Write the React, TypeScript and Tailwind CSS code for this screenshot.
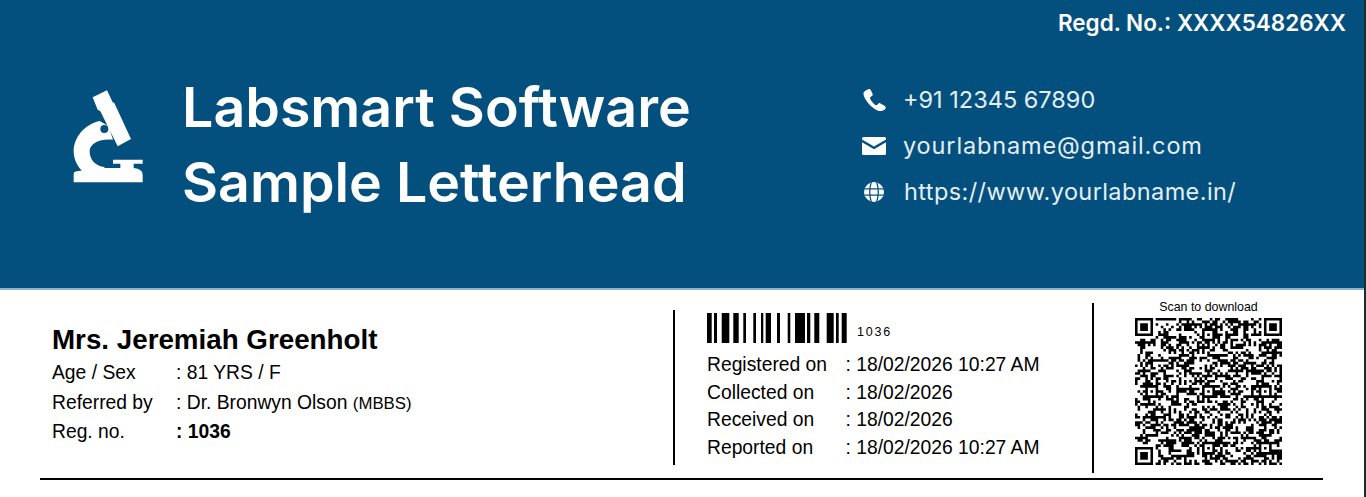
import React from 'react';

const SANS = "font-['Liberation_Sans',Arial,sans-serif]";

// barcode bars as [x, width], measured off the reference
const BARS: [number, number][] = [
  [0, 4.7], [7, 3], [14.7, 7.6], [26.3, 5.4], [36.3, 2.7], [46.3, 2.7], [54, 2.3], [58.7, 5.3],
  [70, 3], [80.7, 2.6], [88, 10], [100, 3.3], [107.3, 5], [119.7, 7], [129, 2.7], [134.7, 5],
];

const QR_SIZE = 57;

function buildQr() {
  const grid: boolean[][] = [];
  let seed = 1036;
  for (let y = 0; y < QR_SIZE; y++) {
    const row: boolean[] = [];
    for (let x = 0; x < QR_SIZE; x++) {
      seed = (seed * 1103515245 + 12345) & 0x7fffffff;
      row.push(((seed >> 16) & 7) > 3);
    }
    grid.push(row);
  }
  const finder = (ox: number, oy: number) => {
    for (let y = -1; y < 8; y++) {
      for (let x = -1; x < 8; x++) {
        const gx = ox + x;
        const gy = oy + y;
        if (gx < 0 || gy < 0 || gx >= QR_SIZE || gy >= QR_SIZE) continue;
        const ring = x >= 0 && x <= 6 && y >= 0 && y <= 6 && (x === 0 || x === 6 || y === 0 || y === 6);
        const core = x >= 2 && x <= 4 && y >= 2 && y <= 4;
        grid[gy][gx] = ring || core;
      }
    }
  };
  finder(0, 0);
  finder(QR_SIZE - 7, 0);
  finder(0, QR_SIZE - 7);
  const align = (cx: number, cy: number) => {
    for (let y = -2; y <= 2; y++) {
      for (let x = -2; x <= 2; x++) {
        grid[cy + y][cx + x] = Math.max(Math.abs(x), Math.abs(y)) !== 1;
      }
    }
  };
  [28, 50].forEach((cy) => [6, 28, 50].forEach((cx) => {
    if (!(cx === 6 && cy === 50)) align(cx, cy);
  }));
  align(28, 6);
  align(6, 28);
  return grid;
}

function QrCode() {
  let d = '';
  buildQr().forEach((row, y) =>
    row.forEach((on, x) => {
      if (on) d += `M${x} ${y}h1v1h-1z`;
    }),
  );
  return (
    <svg viewBox={`0 0 ${QR_SIZE} ${QR_SIZE}`} className="w-[147px] h-[147px]">
      <path d={d} fill="#000" />
    </svg>
  );
}

function Microscope() {
  return (
    <svg viewBox="95 88 216 285" className="w-[72px] h-[95px] shrink-0 mt-[89px]" fill="#fff">
      <path d="M157 113 L200 92 L217 128 L222 130 L272 238 L232 260 L180 155 L172 150 Z" />
      <path d="M178 184 C130 195 100 235 100 275 C100 300 112 322 130 338 L195 338 L192 322 C165 320 148 300 148 275 C148 255 170 236 218 240 L205 200 Z" />
      <path d="M100 345 Q100 335 110 335 L170 325 L240 325 L240 312 L218 312 L218 300 L307 300 L307 312 L280 312 L280 325 Q307 328 307 345 L307 368 L100 368 Z" />
      <circle cx="192" cy="208" r="12" fill="#03507f" />
    </svg>
  );
}

function PhoneIcon() {
  return (
    <svg viewBox="0 0 24 24" className="w-6 h-6 shrink-0" fill="#fff">
      <path d="M6.3 1.2 C5 1.6 2.3 3 1.6 4.6 C1 6 2 9.5 4.8 13.3 C8 17.7 12.8 22 16.6 22.9 C18.5 23.4 22.6 22.3 23.4 20.9 L23.7 19 C23.5 18.5 22.8 18 21.6 17.3 L18.5 15.4 C17.4 14.8 16.9 15 16 15.9 L14.9 17 C14.2 17.5 13.3 17.1 12.3 16.2 C10.4 14.5 9 12.8 8.2 10.8 C7.9 9.8 8 9.3 8.7 8.8 L10 7.9 C10.9 7.2 10.9 6.5 10.4 5.4 L8.9 2.2 C8.3 1 7.4 0.8 6.3 1.2 Z" />
    </svg>
  );
}

function MailIcon() {
  return (
    <svg viewBox="0 0 24 18" className="w-6 h-[18px] shrink-0" fill="#fff">
      <path d="M1.5 0 H22.5 Q24 0 24 1.5 V2.6 L12 9.6 L0 2.6 V1.5 Q0 0 1.5 0 Z" />
      <path d="M0 5.2 L12 12.2 L24 5.2 V16.5 Q24 18 22.5 18 H1.5 Q0 18 0 16.5 Z" />
    </svg>
  );
}

function GlobeIcon() {
  return (
    <svg viewBox="2.5 2.5 19 19" className="w-5 h-5 shrink-0" fill="none">
      <circle cx="12" cy="12" r="9.5" fill="#fff" />
      <path d="M3 9 H21 M3 15 H21 M9.4 2.5 C7.4 9 7.4 15 9.4 21.5 M14.6 2.5 C16.6 9 16.6 15 14.6 21.5" strokeWidth="1.2" stroke="#03507f" />
    </svg>
  );
}

function Row({ label, children, bold }: { label: string; children: React.ReactNode; bold?: boolean }) {
  return (
    <div className="flex h-[29.5px] items-center">
      <span className="w-[124px] shrink-0">{label}</span>
      <span className={bold ? 'font-bold' : ''}>{children}</span>
    </div>
  );
}

function DateRow({ label, value }: { label: string; value: string }) {
  return (
    <div className="flex h-[27.5px] items-center">
      <span className="w-[138.5px] shrink-0">{label}</span>
      <span>: {value}</span>
    </div>
  );
}

export default function App() {
  return (
    <main className="w-[1366px] h-[497px] overflow-hidden bg-white border-r-2 border-[#1c2a36]">
      <header className="relative h-[290px] bg-[#03507f] border-b-2 border-[#8fb3cd] text-white flex items-start pl-[72px] font-['Inter',sans-serif]">
        <div className="flex items-start gap-[38px]">
          <Microscope />
          <h1 className="w-[680px] shrink-0 mt-[69px] text-[55.5px] leading-[75px] font-semibold">
            Labsmart Software
            <br />
            Sample Letterhead
          </h1>
        </div>
        <div className="flex flex-col pt-[88px] gap-[22px] text-[23.5px] leading-[24px] text-[#e6eef4]">
          <div className="flex items-center gap-[17px] h-[24px]">
            <PhoneIcon />
            <span>+91 12345 67890</span>
          </div>
          <div className="flex items-center gap-[17px] h-[24px]">
            <MailIcon />
            <span className="tracking-[0.86px]">yourlabname@gmail.com</span>
          </div>
          <div className="flex items-center gap-[20px] h-[24px] pl-[2px]">
            <GlobeIcon />
            <span className="tracking-[0.4px]">https://www.yourlabname.in/</span>
          </div>
        </div>
        <p className="absolute top-[8px] right-[18px] text-[22.5px] leading-[30px] font-semibold">
          Regd. No.: XXXX54826XX
        </p>
      </header>

      <section className={`${SANS} flex ml-[40px] w-[1283px] h-[190px] border-b-2 border-black text-black`}>
        <div className="w-[633px] shrink-0 pl-[12px] pt-[33px] text-[19.3px]">
          <h2 className="text-[27.75px] leading-[34px] font-bold">Mrs. Jeremiah Greenholt</h2>
          <div className="mt-[2px]">
            <Row label="Age / Sex">: 81 YRS / F</Row>
            <Row label="Referred by">
              : Dr. Bronwyn Olson <span className="text-[16.8px]">(MBBS)</span>
            </Row>
            <Row label="Reg. no." bold>
              : 1036
            </Row>
          </div>
        </div>

        <div className="w-[419px] shrink-0 mt-[20px] h-[155px] border-l-2 border-black pl-[32px] pt-[3px] text-[19.3px]">
          <div className="flex items-end gap-[10px]">
            <svg viewBox="0 0 140 30" className="w-[140px] h-[30px]">
              {BARS.map(([x, w]) => (
                <rect key={x} x={x} y={0} width={w} height={30} fill="#000" />
              ))}
            </svg>
            <span className="text-[12.5px] leading-[14px] tracking-[1.8px] mb-[4px]">1036</span>
          </div>
          <div className="mt-[9px]">
            <DateRow label="Registered on" value="18/02/2026 10:27 AM" />
            <DateRow label="Collected on" value="18/02/2026" />
            <DateRow label="Received on" value="18/02/2026" />
            <DateRow label="Reported on" value="18/02/2026 10:27 AM" />
          </div>
        </div>

        <div className="flex-1 mt-[13px] h-[170px] border-l-2 border-black pl-[41px] flex flex-col">
          <p className="w-[147px] text-center text-[12.4px] leading-[14px] mt-[-3px] whitespace-nowrap">Scan to download</p>
          <div className="mt-[4px] w-[147px]">
            <QrCode />
          </div>
        </div>
      </section>
    </main>
  );
}
